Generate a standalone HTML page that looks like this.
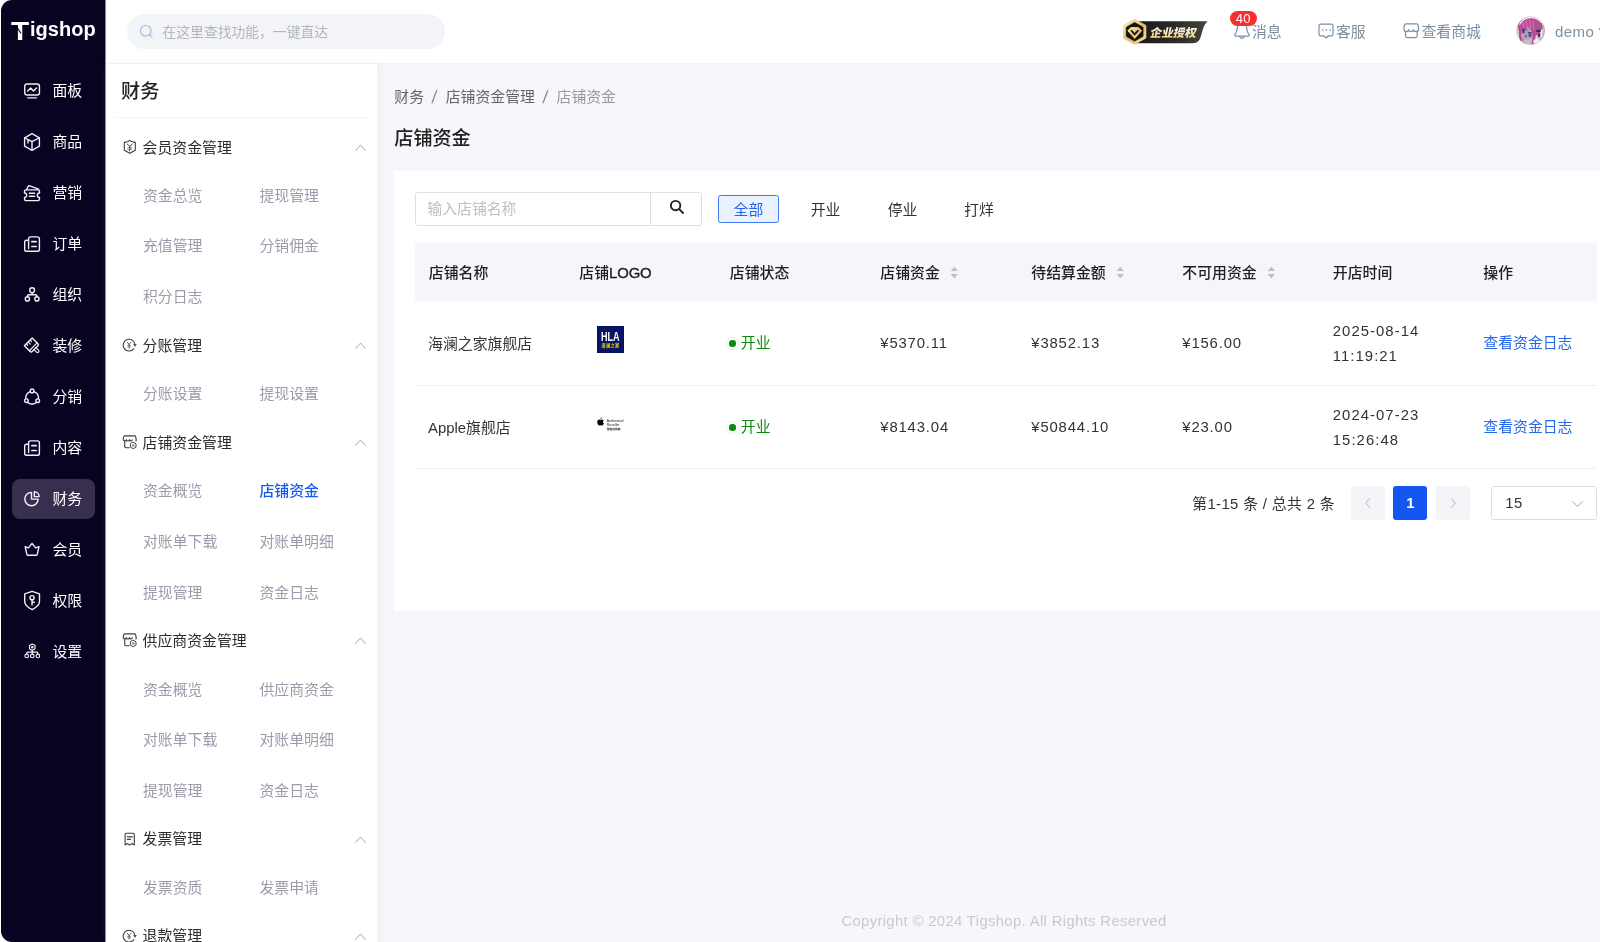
<!DOCTYPE html>
<html lang="zh-CN">
<head>
<meta charset="utf-8">
<title>店铺资金 - Tigshop</title>
<style>
*{box-sizing:border-box;margin:0;padding:0}
html,body{width:1600px;height:942px;overflow:hidden;background:#fff}
body{font-family:"Liberation Sans","Noto Sans CJK SC",sans-serif;font-size:14.875px;color:#333;position:relative;-webkit-font-smoothing:antialiased}
svg{display:block}
#wrap{position:absolute;left:0;top:0;width:1600px;height:942px;will-change:transform;overflow:hidden}
i,em,u{font-style:normal;text-decoration:none}
/* ---------- dark sidebar ---------- */
#side1{position:absolute;left:1px;top:0;width:104px;height:942px;background:#070321;border-top-left-radius:11px;border-bottom-left-radius:11px}
#side1:after{content:'';position:absolute;left:104px;top:0;width:1px;height:942px;background:#8a8899;z-index:5}
#logo{position:absolute;left:9.5px;top:11.7px;font-weight:700;font-size:20px;letter-spacing:.05px;color:#fff;line-height:30px;white-space:nowrap}
#logo .T{font-size:26.5px;position:relative;top:4.2px;margin-right:3.2px;display:inline-block;transform:scaleX(1.12);transform-origin:0 50%}
#logo .cut{position:absolute;left:7px;top:13px;width:1.2px;height:9px;background:#070321;transform:rotate(-32deg)}
.m1{position:absolute;left:11px;width:83px;height:40px;border-radius:8px;color:#fff;font-size:14.875px;line-height:40px;white-space:nowrap}
.m1 span{position:absolute;left:40.5px;top:0}
.m1 svg{position:absolute;left:11px;top:11px;width:18px;height:18px;overflow:visible;fill:none;stroke:#f2f0f7;stroke-width:1.4;stroke-linecap:round;stroke-linejoin:round}
.m1 svg .k{fill:#070321}
.m1.on{background:#382e4e}
/* ---------- header ---------- */
#head{position:absolute;left:105px;top:0;width:1495px;height:64px;background:#fff;border-bottom:1px solid #f3f4f7}
#gsearch{position:absolute;left:22px;top:14px;width:318px;height:34.5px;border-radius:18px;background:#f3f4f8;color:#b4b6bf;font-size:13.8px;line-height:37.8px;padding-left:35.5px;white-space:nowrap}
#gsearch svg{position:absolute;left:11.6px;top:10.2px;width:15px;height:15px;fill:none;stroke:#a6b8e6;stroke-width:1.25;stroke-linecap:round}
#ent{position:absolute;left:1017px;top:18px}
.hi{position:absolute;top:20.5px;height:22px;line-height:22px;color:#7d8fa2;font-size:14.875px;white-space:nowrap}
.hi svg{position:absolute;left:0;margin-top:-.5px;fill:none;stroke:#7d8fa2;stroke-width:1.2;stroke-linecap:round;stroke-linejoin:round}
.hi span{position:absolute;top:0}
.bdg{position:absolute;left:-3.5px;top:-9.6px;width:26.5px;height:15px;border-radius:8px;background:#fa2e2e;color:#fff;font-size:13px;line-height:15px;text-align:center;letter-spacing:.3px}
#avatar{position:absolute;left:1411px;top:16px;width:29.2px;height:29.2px}
#uname{position:absolute;left:1450px;top:20.6px;line-height:22px;color:#7d8fa2;font-size:15px;letter-spacing:.45px;white-space:nowrap}
/* ---------- sub sidebar ---------- */
#side2{position:absolute;left:105px;top:64px;width:272px;height:878px;background:#fff;overflow:hidden;z-index:2;box-shadow:3px 0 8px rgba(200,205,220,.18)}
#side2 h2{position:absolute;left:16px;top:14.4px;font-size:19.2px;font-weight:500;color:#222;line-height:28px}
#side2 .hr{position:absolute;left:11px;top:52.5px;width:251px;height:1px;background:#f2f2f5}
.g{position:absolute;left:37.6px;font-size:14.875px;color:#2c2c2c;line-height:22px;white-space:nowrap}
.g svg.ic{position:absolute;left:-20.5px;top:3.5px;width:15px;height:15px;overflow:visible;fill:none;stroke:#3d3d3d;stroke-width:1.1;stroke-linecap:round;stroke-linejoin:round}
.g svg.ar{position:absolute;left:211px;top:7.6px;width:13px;height:7.6px;fill:none;stroke:#b9bbc6;stroke-width:1.1}
.it{position:absolute;font-size:14.875px;color:#9a9caa;line-height:22px;white-space:nowrap}
.it.on{color:#1759ee;font-weight:500}
/* ---------- main ---------- */
#main{position:absolute;left:377px;top:64px;width:1223px;height:878px;background:#f5f7fa;overflow:hidden}
#bc{position:absolute;left:17.3px;top:21px;line-height:22px;font-size:14.875px;color:#666;white-space:nowrap}
#bc em{margin:0 8.4px;color:#8a8a8a;font-size:17.5px;position:relative;top:1.2px;display:inline-block;transform:skewX(-6deg)}
#bc .last{color:#9a9a9a}
h1{position:absolute;left:17.3px;top:60.6px;font-size:19.1px;font-weight:500;color:#222;line-height:28px}
#card{position:absolute;left:17.3px;top:107.4px;width:1300px;height:439.6px;background:#fff}
#kw{position:absolute;left:21px;top:20.6px;width:286.5px;height:34.4px;border:1px solid #dde0e8;border-radius:2.5px;background:#fff;font-size:14.875px;line-height:32px;color:#bfbfbf;padding-left:11px;white-space:nowrap}
#kw .btn{position:absolute;right:0;top:0;width:51px;height:32.4px;border-left:1px solid #dcdee3}
#kw .btn svg{position:absolute;left:18px;top:5.9px;width:16px;height:16px;fill:none;stroke:#222;stroke-width:1.9;stroke-linecap:round}
.tab{position:absolute;top:23.6px;width:61.4px;height:28.4px;line-height:29px;text-align:center;border:1px solid transparent;border-radius:2.5px;font-size:14.875px;color:#333;white-space:nowrap}
.tab.on{background:#ebf2ff;border-color:#4278f3;color:#2463ea}
#th{position:absolute;left:21px;top:71.7px;width:1182px;height:58.3px;background:#f5f6fa;font-weight:500;color:#1f1f1f;font-size:14.875px;line-height:60.4px;white-space:nowrap}
#th div{position:absolute;top:0}
.st{position:absolute;right:-18.5px;top:22.6px;width:8.6px;height:13.2px;fill:#bfbfbf}
.tr{position:absolute;left:21px;width:1182px;height:84px;border-bottom:1px solid #eef0f5;font-size:14.875px;color:#333;white-space:nowrap}
.tr>div{position:absolute}
.c1{left:12.8px;top:30.8px;line-height:22px}
.hla{left:181.8px;top:24px;width:26.7px;height:26.8px;background:#061565;box-shadow:inset 0 0 0 .6px #04104f;color:#fff;text-align:center;overflow:hidden}
.hla b{display:block;font-size:12.6px;line-height:12px;margin-top:5.2px;margin-left:-6px;margin-right:-6px;transform:scaleX(.72)}
.hla i{display:block;font-size:4.3px;font-weight:700;line-height:5px;letter-spacing:.25px;color:#f5d800;margin-top:.2px}
.apl{left:182px;top:30.7px;width:30px;height:15px}
.apl svg{position:absolute;left:0;top:0;width:7.4px;height:9.2px;fill:#0a0a0a}
.apl span{position:absolute;left:9.4px;top:1.4px;font-size:3.5px;line-height:4px;color:#222;white-space:nowrap;font-weight:400;top:2.2px}
.apl span i{display:block;font-size:2.75px;line-height:4px;margin-top:.9px;font-weight:700}
.c3{left:325.5px;top:30.5px;line-height:22px;color:#10890f}
.c3 u{position:absolute;left:-11.4px;top:7.7px;width:6.4px;height:6.4px;border-radius:50%;background:#0f890f}
.c3 u:after{content:'';position:absolute;left:-3px;top:-3px;width:12.4px;height:12.4px;border-radius:50%;border:1.2px solid rgba(16,137,16,.11);box-sizing:border-box}
.num{top:30.5px;line-height:22px;letter-spacing:.84px}
.dt{left:917.5px;top:17.5px;line-height:24.4px;letter-spacing:1.05px}
.op{left:1068px;top:30.5px;line-height:22px;color:#2668e8}
#pg{position:absolute;left:0;top:314.8px;width:1300px;height:34px;font-size:14.875px}
#pg .tot{position:absolute;left:798px;top:0;line-height:36px;color:#333;white-space:nowrap;letter-spacing:.35px}
.pb{position:absolute;top:0;width:34px;height:33.6px;border-radius:3px;background:#f4f5f9;text-align:center;line-height:35.6px;margin-left:-.4px;font-weight:700;color:#fff}
.pb svg{position:absolute;left:13px;top:11px;width:8px;height:12px;fill:none;stroke:#c4c6cc;stroke-width:1.1}
.pb.cur{background:#1456f0}
.sel{position:absolute;left:1097px;top:0;width:105.6px;height:33.5px;border:1px solid #dcdee3;border-radius:2.5px;line-height:33.4px;padding-left:13px;color:#333;letter-spacing:.5px}
.sel svg{position:absolute;right:12px;top:12.5px;width:13px;height:8px;fill:none;stroke:#bbbdc4;stroke-width:1.1}
#foot{position:absolute;left:0;top:845.5px;width:1254px;text-align:center;line-height:22px;color:#c9cacf;font-size:14.875px;letter-spacing:.34px;white-space:nowrap}
#th s{text-decoration:none;-webkit-text-stroke:.35px #1f1f1f;letter-spacing:-.1px}
#ucar{position:absolute;left:1493.4px;top:28px;fill:#7d8fa2}
</style>
</head>
<body>
<div id="wrap">
<div id="side1">
  <div id="logo"><span class="T">T</span><span class="cut"></span>igshop</div>
  <div class="m1" style="top:70.5px"><svg viewBox="0 0 18 18"><rect x="1.75" y="1.95" width="14.7" height="11" rx="2.3"/><polyline points="4.6,9 7.6,6.1 10.5,9 13.5,6"/><line x1="4.8" y1="15.9" x2="13.3" y2="15.9"/></svg><span>面板</span></div>
  <div class="m1" style="top:121.5px"><svg viewBox="0 0 18 18"><path d="M9 .7 16.4 4.8v8.4L9 17.3 1.6 13.2V4.8Z"/><path d="M1.9 5 9 8.7l7.1-3.7M9 8.7v8.3M5 6.8v3.2"/></svg><span>商品</span></div>
  <div class="m1" style="top:172.5px"><svg viewBox="0 0 18 18"><path d="M3 5.9h12a1.5 1.5 0 0 1 1.5 1.5v1.6a2.2 2.2 0 0 0 0 4.4v1.7a1.5 1.5 0 0 1-1.5 1.5H3a1.5 1.5 0 0 1-1.5-1.5v-1.7a2.2 2.2 0 0 0 0-4.4V7.4A1.5 1.5 0 0 1 3 5.9Z"/><path d="M6.4 9.3h5.2M6.4 12.2h5.2" stroke-width="1.6"/><path d="M3.5 5.6 5.1 2.5q.6-.9 1.6-.6L15.6 5.2"/></svg><span>营销</span></div>
  <div class="m1" style="top:223.5px"><svg viewBox="0 0 18 18"><path d="M5.6 13.5V3.7a1.8 1.8 0 0 1 1.8-1.8h7.2a1.8 1.8 0 0 1 1.8 1.8v10.8a1.8 1.8 0 0 1-1.8 1.8H3.5a1.8 1.8 0 0 1-1.8-1.8V7a1.8 1.8 0 0 1 1.8-1.8h2.1"/><path d="M8.9 6.7h4.2M8.9 11.5h4.2" stroke-width="1.7"/></svg><span>订单</span></div>
  <div class="m1" style="top:274.5px"><svg viewBox="0 0 18 18"><circle cx="9.1" cy="4.2" r="2.4"/><circle cx="4.4" cy="12.9" r="2.1"/><circle cx="13.9" cy="12.9" r="2.1"/><path d="M9.1 6.6v2.2M4.4 10.8v-.9a1.1 1.1 0 0 1 1.1-1.1h7.3a1.1 1.1 0 0 1 1.1 1.1v.9"/></svg><span>组织</span></div>
  <div class="m1" style="top:325.5px"><svg viewBox="0 0 18 18"><g transform="translate(8.65 8.2) rotate(-45)"><path d="M-5.5-4.8h11v8.2a1.4 1.4 0 0 1-1.4 1.4h-8.2a1.4 1.4 0 0 1-1.4-1.4Z"/><path d="M-5.5 2.3h11M-1.4 4.8v3.5a1.4 1.4 0 0 0 2.8 0V4.8M-2.9-4.6v2M-.2-4.6v2.8M2.5-4.6v2" stroke-width="1.2"/></g></svg><span>装修</span></div>
  <div class="m1" style="top:376.5px"><svg viewBox="0 0 18 18"><circle cx="9.1" cy="9.8" r="6.4"/><circle class="k" cx="9.1" cy="2.9" r="1.85"/><circle class="k" cx="3.4" cy="12.7" r="1.85"/><circle class="k" cx="14.7" cy="12.7" r="1.85"/></svg><span>分销</span></div>
  <div class="m1" style="top:427.5px"><svg viewBox="0 0 18 18"><path d="M5.6 13.5V3.7a1.8 1.8 0 0 1 1.8-1.8h7.2a1.8 1.8 0 0 1 1.8 1.8v10.8a1.8 1.8 0 0 1-1.8 1.8H3.5a1.8 1.8 0 0 1-1.8-1.8V7a1.8 1.8 0 0 1 1.8-1.8h2.1"/><path d="M8.9 6.7h4.2M8.9 11.5h4.2" stroke-width="1.7"/></svg><span>内容</span></div>
  <div class="m1 on" style="top:478.5px"><svg viewBox="0 0 18 18"><path d="M8.5 2.4A6.7 6.7 0 1 0 15.2 9.1H8.5Z"/><path d="M11.3 1.8A4.8 4.8 0 0 1 16.1 6.6H11.3Z"/></svg><span>财务</span></div>
  <div class="m1" style="top:529.5px"><svg viewBox="0 0 18 18"><path d="M2.2 5.7 5.5 6.9 9 2.4l3.6 4.5 3.4-1.2-1.7 7.5a1.4 1.4 0 0 1-1.4 1H5.2a1.4 1.4 0 0 1-1.4-1Z"/></svg><span>会员</span></div>
  <div class="m1" style="top:580.5px"><svg viewBox="0 0 18 18"><path d="M9.1-.6 16.5 1.9v7.6c0 3.6-3 5.8-7.4 8.2-4.4-2.4-7.4-4.6-7.4-8.2V1.9Z"/><circle cx="9.05" cy="5.7" r="2.1"/><path d="M9.05 7.8v5.2M9.05 10.2h2.3" stroke-width="1.5"/></svg><span>权限</span></div>
  <div class="m1" style="top:631.5px"><svg viewBox="0 0 18 18"><g stroke-width="1.15"><path d="M9.3 1 12.07 2.6v3.2L9.3 7.4 6.53 5.8V2.6Z"/><circle cx="9.3" cy="4.2" r=".7" fill="#fff"/><circle cx="3.7" cy="12.9" r="1.8"/><circle cx="9.3" cy="12.9" r="1.8"/><circle cx="14.9" cy="12.9" r="1.8"/><path d="M9.3 7.4v3.7M3.7 11.1v-1a1 1 0 0 1 1-1h9.2a1 1 0 0 1 1 1v1"/></g></svg><span>设置</span></div>
</div>
<div id="head">
  <div id="gsearch"><svg viewBox="0 0 16 16"><circle cx="7.2" cy="7.2" r="5.6"/><path d="M11.4 11.4 14 14"/></svg>在这里查找功能，一键直达</div>
  <div id="ent"><svg viewBox="0 0 88 28" width="88" height="28">
    <defs><linearGradient id="gd" x1="0" y1="0" x2="1" y2="1"><stop offset="0" stop-color="#fdeeb8"/><stop offset=".55" stop-color="#e4ba64"/><stop offset="1" stop-color="#f9e3a2"/></linearGradient>
    <linearGradient id="dk" x1="0" y1="0" x2="1" y2="0"><stop offset="0" stop-color="#161614"/><stop offset=".55" stop-color="#2b2b27"/><stop offset="1" stop-color="#45453d"/></linearGradient>
    <linearGradient id="tx" x1="0" y1="0" x2="0" y2="1"><stop offset="0" stop-color="#fffef4"/><stop offset="1" stop-color="#efcb74"/></linearGradient></defs>
    <path d="M12 3.3H85.6C81.6 6.6 80.6 13 78.8 18.6 77.4 23.2 75.4 25.2 70.6 25.2H12Z" fill="url(#dk)"/>
    <path d="M12.65 1.9 23.3 7.9v11.8L12.65 25.7 2 19.7V7.9Z" fill="url(#gd)" stroke="url(#gd)" stroke-width="2" stroke-linejoin="round"/>
    <path d="M12.65 4.6 21 9.3v9L12.65 23 4.3 18.3v-9Z" fill="#151310" stroke="#151310" stroke-width=".8" stroke-linejoin="round"/>
    <path d="M8.9 9.6h7.6l3 3.2-6.8 7.6-6.8-7.6Z" fill="url(#gd)" stroke="url(#gd)" stroke-width="1" stroke-linejoin="round"/>
    <path d="M9.5 12.7 12.7 16.4l3.2-3.7" fill="none" stroke="#151310" stroke-width="1.7" stroke-linecap="round" stroke-linejoin="round"/>
    <text x="0" y="0" font-size="11.6" font-weight="900" fill="url(#tx)" font-family="'Liberation Sans','Noto Sans CJK SC',sans-serif" transform="translate(27.6 19.4) skewX(-12)">企业授权</text>
  </svg></div>
  <div class="hi" style="left:1128.5px"><svg viewBox="0 0 18 18" style="left:-1px;top:2px;width:18px;height:18px"><path d="M9 2C6 2 4 4.2 4 7.5c0 2.5-.6 3.5-1.8 4.5C1.2 12.8 1.6 14.2 3 14.2H15c1.4 0 1.8-1.4.8-2.2C14.6 11 14 10 14 7.5 14 4.2 12 2 9 2Z"/><path d="M6.8 14.4c.4 2.6 4 2.6 4.4 0"/></svg><span style="left:18.5px">消息</span><i class="bdg">40</i></div>
  <div class="hi" style="left:1213px"><svg viewBox="0 0 16 16" style="left:0;top:2.5px;width:16px;height:16px"><path d="M2.6 1.2h10.8a1.6 1.6 0 0 1 1.6 1.6v8.4a1.6 1.6 0 0 1-1.6 1.6H10.4L8 15l-2.4-2.2H2.6a1.6 1.6 0 0 1-1.6-1.6V2.8a1.6 1.6 0 0 1 1.6-1.6Z"/><path d="M4.7 7h.01M8.4 7h.01M12.2 7h.01" stroke-width="1.7"/></svg><span style="left:18px">客服</span></div>
  <div class="hi" style="left:1298px"><svg viewBox="0 0 17 16" style="left:0;top:2.6px;width:17px;height:16px"><path d="M.9 6.6 1.3 2.4A1.7 1.7 0 0 1 3 .9h10.5a1.7 1.7 0 0 1 1.7 1.5l.4 4.2c0 2.6-5 2.6-5.2 0-.3 2.6-4.4 2.6-4.7 0-.3 2.6-4.8 2.6-4.8 0Z"/><path d="M2.5 8.3v4.5a1.8 1.8 0 0 0 1.8 1.8h8a1.8 1.8 0 0 0 1.8-1.8V8.3"/></svg><span style="left:18.5px">查看商城</span></div>
  <div id="avatar"><svg viewBox="0 0 29 29" width="29.2" height="29.2"><defs><clipPath id="avc"><circle cx="14.5" cy="14.5" r="14.3"/></clipPath><filter id="avb" x="-10%" y="-10%" width="120%" height="120%"><feGaussianBlur stdDeviation=".55"/></filter></defs>
    <g clip-path="url(#avc)"><g filter="url(#avb)">
    <rect width="29" height="29" fill="#e9dfe6"/>
    <ellipse cx="25" cy="17" rx="5" ry="9" fill="#cdbfc4"/>
    <ellipse cx="14" cy="11" rx="12.2" ry="9.6" fill="#bd4f9a"/>
    <ellipse cx="21.5" cy="11" rx="5" ry="5.5" fill="#ad528f"/>
    <path d="M10 4.5 11.5 12M13.5 4 14.5 12.5M7 6 8 11.5M17 5 17.5 14" stroke="#d07ab6" stroke-width=".9" fill="none"/>
    <path d="M3.5 8.5C6 3.5 11 1.6 15 1.6s8 1.4 10.5 5.4" stroke="#fbf3f7" stroke-width="1.1" fill="none"/>
    <path d="M4.5 14 12 11l7 6.5-1.5 9.5-9.5.8-4-4.8Z" fill="#aba7af"/>
    <path d="M7.5 23.5 17 22.5l-.5 5-8 .5Z" fill="#c3bfc6"/>
    <path d="M15 12.5c2.5 1 4.5 3.5 4.5 7.5l-.7 7.5-3.3.5 1-8.5Z" fill="#b84c95"/>
    <path d="M3 14.5 5.5 13.5 5 20l1.5 4.5-2 .5C3 22.5 2.5 18 3 14.5Z" fill="#b24a90"/>
    <path d="M5 13.5 9 10.5l3.5 4.5-3.3-.5Z" fill="#bd4f9a"/>
    <ellipse cx="6.6" cy="19.4" rx="1.7" ry="1.4" fill="#d69b8b"/>
    <ellipse cx="12.6" cy="22" rx="1.5" ry="1.1" fill="#d4a097"/>
    <ellipse cx="7.4" cy="15.4" rx="1.4" ry="1.9" fill="#4a38ae"/>
    <ellipse cx="13.9" cy="19" rx="1.6" ry="2" fill="#5140b6"/>
    <path d="M5.6 13.8 8.6 13.2M11.8 16.7 15.6 16.4" stroke="#2a2238" stroke-width=".9"/>
    <ellipse cx="9.7" cy="19.9" rx="1.4" ry=".6" fill="#45414c"/>
    <ellipse cx="22.3" cy="14.8" rx="2.4" ry="1.2" fill="#2e2a68"/>
    <ellipse cx="23" cy="19" rx="1.3" ry="2.2" fill="#3a3560"/>
    <path d="M25.5 13.5 25 21" stroke="#f6f1ee" stroke-width="1.3"/>
    <ellipse cx="20.5" cy="25.5" rx="3.4" ry="2.6" fill="#f3efe8"/>
    <ellipse cx="1.6" cy="16.5" rx="1.4" ry="3" fill="#e6cfba"/>
    </g><circle cx="14.5" cy="14.5" r="13.9" fill="none" stroke="#9a8a96" stroke-opacity=".35" stroke-width=".8"/></g></svg></div>
  <div id="uname">demo</div>
  <svg id="ucar" viewBox="0 0 8 5" width="8" height="5"><path d="M.2.2h7.6L4 4.8Z"/></svg>
</div>
<div id="side2">
  <h2>财务</h2><div class="hr"></div>
  <div class="g" style="top:72.5px"><svg class="ic" viewBox="0 0 15 15"><path d="M7.8 .4 9.4 1.5 13.3 2.4v7.8L7.8 13.3 2.3 10.2V2.4L6.2 1.5Z"/><path d="M5.2 4 7.8 6.3l2.6-2.3M7.8 6.3v4.6" stroke-width="1"/><path d="M5.7 7.7h4.2M5.7 9.3h4.2" stroke-width=".8" opacity=".7"/></svg>会员资金管理<svg class="ar" viewBox="0 0 13 8"><path d="M1 7 6.5 1.3 12 7"/></svg></div>
  <div class="it" style="left:38px;top:120.7px">资金总览</div>
  <div class="it" style="left:154.5px;top:120.7px">提现管理</div>
  <div class="it" style="left:38px;top:171.4px">充值管理</div>
  <div class="it" style="left:154.5px;top:171.4px">分销佣金</div>
  <div class="it" style="left:38px;top:222.4px">积分日志</div>
  <div class="g" style="top:270.5px"><svg class="ic" viewBox="0 0 15 15"><path d="M11.75 10.8A5.9 5.9 0 1 1 13 7"/><path d="M11.9 6.4h2.4L13.1 8.2Z" fill="#333" stroke-width=".5"/><path d="M5.4 4.4 7.1 6.6l1.7-2.2M7.1 6.6v3.6" stroke-width=".95" opacity=".85"/><path d="M5.6 7.5h3M5.6 8.8h3" stroke-width=".75" opacity=".6"/></svg>分账管理<svg class="ar" viewBox="0 0 13 8"><path d="M1 7 6.5 1.3 12 7"/></svg></div>
  <div class="it" style="left:38px;top:318.8px">分账设置</div>
  <div class="it" style="left:154.5px;top:318.8px">提现设置</div>
  <div class="g" style="top:367.7px"><svg class="ic" viewBox="0 0 15 15"><path d="M13.9 6c.3-.3.4-.7.3-1.2L13.7 1.9a1.1 1.1 0 0 0-1.1-1H2.8a1.1 1.1 0 0 0-1.1 1L1.2 4.6c0 1.8 3 1.8 3.2 0 .2 1.8 2.9 1.8 3.1 0 .2 1.7 2.4 1.7 2.8.3"/><path d="M2.7 6.1v5.4a1.2 1.2 0 0 0 1.2 1.2h3.3"/><path d="M11.2 7.3 14 8.9v3.2L11.2 13.7 8.4 12.1V8.9Z" stroke-width=".95"/><circle cx="11.2" cy="10.5" r="1.2" fill="#888" stroke="none"/></svg>店铺资金管理<svg class="ar" viewBox="0 0 13 8"><path d="M1 7 6.5 1.3 12 7"/></svg></div>
  <div class="it" style="left:38px;top:415.7px">资金概览</div>
  <div class="it on" style="left:154.5px;top:415.7px">店铺资金</div>
  <div class="it" style="left:38px;top:466.7px">对账单下载</div>
  <div class="it" style="left:154.5px;top:466.7px">对账单明细</div>
  <div class="it" style="left:38px;top:517.7px">提现管理</div>
  <div class="it" style="left:154.5px;top:517.7px">资金日志</div>
  <div class="g" style="top:565.9px"><svg class="ic" viewBox="0 0 15 15"><path d="M13.9 6c.3-.3.4-.7.3-1.2L13.7 1.9a1.1 1.1 0 0 0-1.1-1H2.8a1.1 1.1 0 0 0-1.1 1L1.2 4.6c0 1.8 3 1.8 3.2 0 .2 1.8 2.9 1.8 3.1 0 .2 1.7 2.4 1.7 2.8.3"/><path d="M2.7 6.1v5.4a1.2 1.2 0 0 0 1.2 1.2h3.3"/><path d="M11.2 7.3 14 8.9v3.2L11.2 13.7 8.4 12.1V8.9Z" stroke-width=".95"/><circle cx="11.2" cy="10.5" r="1.2" fill="#888" stroke="none"/></svg>供应商资金管理<svg class="ar" viewBox="0 0 13 8"><path d="M1 7 6.5 1.3 12 7"/></svg></div>
  <div class="it" style="left:38px;top:614.6px">资金概览</div>
  <div class="it" style="left:154.5px;top:614.6px">供应商资金</div>
  <div class="it" style="left:38px;top:665.2px">对账单下载</div>
  <div class="it" style="left:154.5px;top:665.2px">对账单明细</div>
  <div class="it" style="left:38px;top:716.0px">提现管理</div>
  <div class="it" style="left:154.5px;top:716.0px">资金日志</div>
  <div class="g" style="top:764.4px"><svg class="ic" viewBox="0 0 15 15"><path d="M3.1 13V2.7a1.4 1.4 0 0 1 1.4-1.4h6.4a1.4 1.4 0 0 1 1.4 1.4V13l-2.3-1.5-2.3 1.6-2.3-1.6Z"/><path d="M5.3 4.8h5M5.3 7.3h3.2" stroke-width="1.3"/></svg>发票管理<svg class="ar" viewBox="0 0 13 8"><path d="M1 7 6.5 1.3 12 7"/></svg></div>
  <div class="it" style="left:38px;top:812.7px">发票资质</div>
  <div class="it" style="left:154.5px;top:812.7px">发票申请</div>
  <div class="g" style="top:861.2px"><svg class="ic" viewBox="0 0 15 15"><path d="M11.75 10.8A5.9 5.9 0 1 1 13 7"/><path d="M11.9 6.4h2.4L13.1 8.2Z" fill="#333" stroke-width=".5"/><path d="M5.4 4.4 7.1 6.6l1.7-2.2M7.1 6.6v3.6" stroke-width=".95" opacity=".85"/><path d="M5.6 7.5h3M5.6 8.8h3" stroke-width=".75" opacity=".6"/></svg>退款管理<svg class="ar" viewBox="0 0 13 8"><path d="M1 7 6.5 1.3 12 7"/></svg></div>
</div>
<div id="main">
  <div id="bc"><span>财务</span><em>/</em><span>店铺资金管理</span><em>/</em><span class="last">店铺资金</span></div>
  <h1>店铺资金</h1>
  <div id="card">
    <div id="kw"><span>输入店铺名称</span><div class="btn"><svg viewBox="0 0 16 16"><circle cx="6.6" cy="6.6" r="4.7"/><path d="M10.2 10.2 14 14"/></svg></div></div>
    <div class="tab on" style="left:323.4px">全部</div><div class="tab" style="left:400.5px">开业</div><div class="tab" style="left:477.5px">停业</div><div class="tab" style="left:554px">打烊</div>
    <div id="th"><div style="left:13.5px">店铺名称</div><div style="left:164px">店铺<s>LOGO</s></div><div style="left:314.5px">店铺状态</div><div style="left:465px">店铺资金<svg class="st" viewBox="0 0 8 12"><path d="M4 .6 7.4 4.6H.6Z"/><path d="M4 11.4.6 7.4h6.8Z"/></svg></div><div style="left:616px">待结算金额<svg class="st" viewBox="0 0 8 12"><path d="M4 .6 7.4 4.6H.6Z"/><path d="M4 11.4.6 7.4h6.8Z"/></svg></div><div style="left:767px">不可用资金<svg class="st" viewBox="0 0 8 12"><path d="M4 .6 7.4 4.6H.6Z"/><path d="M4 11.4.6 7.4h6.8Z"/></svg></div><div style="left:917.5px">开店时间</div><div style="left:1068px">操作</div></div>
    <div class="tr" style="top:130.6px;height:84px"><div class="c1">海澜之家旗舰店</div><div class="hla"><b>HLA</b><i>海澜之家</i></div><div class="c3"><u></u>开业</div><div class="num" style="left:465px">¥5370.11</div><div class="num" style="left:616px">¥3852.13</div><div class="num" style="left:767px">¥156.00</div><div class="dt">2025-08-14<br>11:19:21</div><div class="op">查看资金日志</div></div>
    <div class="tr" style="top:214.6px;height:83px"><div class="c1">Apple旗舰店</div><div class="apl"><svg viewBox="0 0 10 12"><path d="M7.1 3.1c-.9 0-1.4.5-2.1.5s-1.3-.5-2.1-.5C1.4 3.1.3 4.4.3 6.4c0 2.3 1.6 5 2.8 5 .7 0 1-.5 1.9-.5s1.1.5 1.9.5c1 0 2.1-1.7 2.5-3-1.8-.7-1.9-3.4-.2-4.2-.5-.7-1.3-1.1-2.1-1.1ZM6.6.2c-1 .1-1.9 1-1.8 2.2 1 0 1.9-1 1.8-2.2Z"/></svg><span>Authorized<br>Reseller<i>授权经销商</i></span></div><div class="c3"><u></u>开业</div><div class="num" style="left:465px">¥8143.04</div><div class="num" style="left:616px">¥50844.10</div><div class="num" style="left:767px">¥23.00</div><div class="dt">2024-07-23<br>15:26:48</div><div class="op">查看资金日志</div></div>
    <div id="pg"><span class="tot">第1-15 条 / 总共 2 条</span><div class="pb" style="left:957.3px"><svg viewBox="0 0 8 12"><path d="M6 1.4 1.8 6 6 10.6"/></svg></div><div class="pb cur" style="left:999.5px">1</div><div class="pb" style="left:1041.7px"><svg viewBox="0 0 8 12"><path d="M2 1.4 6.2 6 2 10.6"/></svg></div><div class="sel">15<svg viewBox="0 0 14 8"><path d="M1.4 1.2 7 6.6l5.6-5.4"/></svg></div></div>
  </div>
  <div id="foot">Copyright © 2024 Tigshop. All Rights Reserved</div>
</div>
</div>
</body>
</html>
